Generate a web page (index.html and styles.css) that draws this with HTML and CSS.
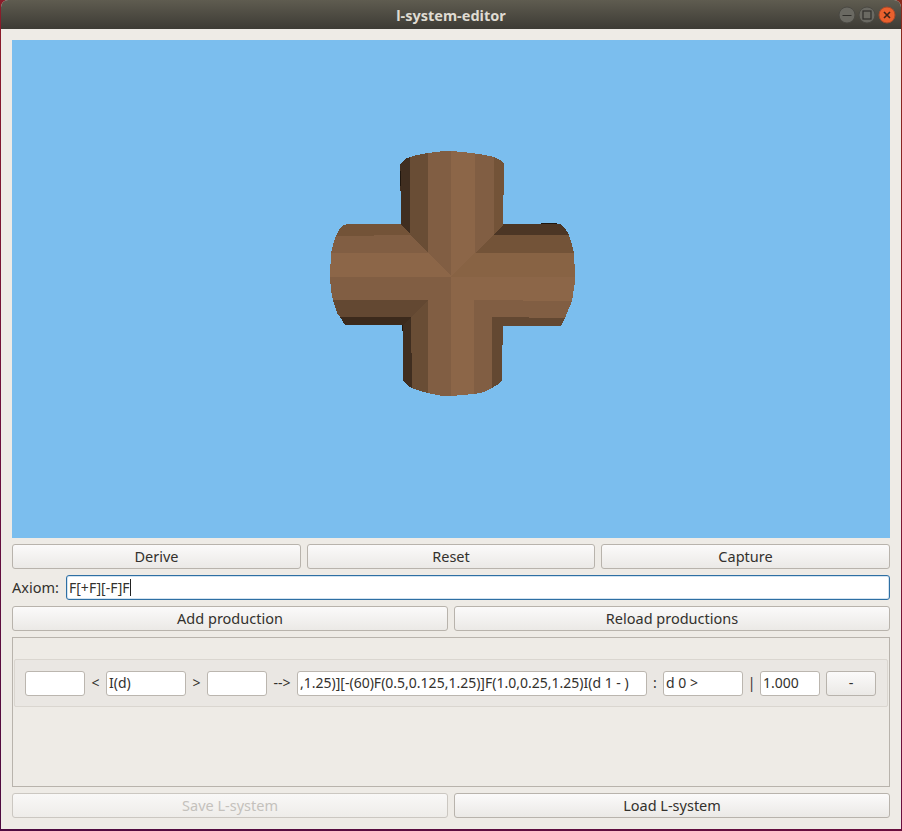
FILE: index.html
```html
<!DOCTYPE html>
<html lang="en">
<head>
<meta charset="utf-8">
<title>l-system-editor</title>
<link rel="stylesheet" href="styles.css">
</head>
<body>
<div class="window">
  <header class="titlebar">
    <div></div>
    <div class="title">l-system-editor</div>
    <div class="controls">
      <svg class="ctl" viewBox="0 0 18 18"><circle class="ctl-gray" cx="9" cy="9" r="8"/><path class="ctl-glyph" d="M4.5 9.5h9"/></svg>
      <svg class="ctl" viewBox="0 0 18 18"><circle class="ctl-gray" cx="9" cy="9" r="8"/><rect class="ctl-glyph" x="5" y="5" width="8" height="8"/></svg>
      <svg class="ctl" viewBox="0 0 18 18"><circle class="ctl-close" cx="9" cy="9" r="8"/><path class="ctl-x" d="M6 6l6 6M12 6l-6 6"/></svg>
    </div>
  </header>
  <main class="content">
    <div class="viewport">
      <svg class="scene" viewBox="12 40 878 498">
        <!-- base fill under the seams between the faces -->
        <polygon class="c-mid" points="401,224 503,225 475,253 451,277 428,300 411,317 428,253"/>
        <polygon class="c-dark2" points="401,224 451,277 410,235"/>
        <!-- left arm -->
        <polygon class="c-dark2" points="348,224 401,224 411,235 336,236 340,228 343,225"/>
        <polygon class="c-mid" points="336,236 411,235 429,253 331,253 333,245"/>
        <polygon class="c-light" points="331,253 429,253 452,277 330,277 330,275"/>
        <polygon class="c-mid" points="330,277 451,277 428,300 333,300 331,290"/>
        <polygon class="c-dark3" points="333,300 428,300 411,317 340,317 337,313"/>
        <polygon class="c-darkest2" points="340,317 411,317 403,325 345,325"/>
        <!-- right arm -->
        <polygon class="c-shade" points="503,224 560,224 565,228 569,235 494,235"/>
        <polygon class="c-dark2" points="494,235 569,235 572,245 574,253 475,253"/>
        <polygon class="c-light2" points="475,253 574,253 575,275 575,277 451,277 451,275"/>
        <polygon class="c-light" points="451,277 575,277 575,282 572,301 474,300"/>
        <polygon class="c-mid" points="474,300 572,301 565,318 492,317"/>
        <polygon class="c-dark3" points="492,317 565,318 561,326 503,326"/>
        <!-- top arm -->
        <polygon class="c-darkest" points="400,164 403,161 407,158 410,157 410,234 401,224 401,195 400,186"/>
        <polygon class="c-dark" points="410,157 415,155.5 420,154.5 428,153 428,253 410,234"/>
        <polygon class="c-mid" points="428,153 440,151.5 451,151 451,276 428,253"/>
        <polygon class="c-light" points="451,151 463,152 475,153.5 475,253 451,276"/>
        <polygon class="c-mid" points="475,153.5 485,155 494,157 494,235 475,253"/>
        <polygon class="c-dark2" points="494,157 500,160 504,163 504,195 503,195 503,225 494,235"/>
        <!-- bottom arm -->
        <polygon class="c-darkest" points="403,325 411,317 412,388 407,385 403,381"/>
        <polygon class="c-dark" points="411,317 428,300 428,393 420,391 412,388"/>
        <polygon class="c-mid" points="428,300 451,277 451,396 440,395.5 428,393"/>
        <polygon class="c-light" points="451,277 474,300 474,394 462,395 451,396"/>
        <polygon class="c-mid" points="474,300 492,317 492,388 484,392 474,394"/>
        <polygon class="c-dark3" points="492,317 503,326 503,340 502,350 502,381 497,385 492,388"/>
        <!-- stray edge pixels -->
        <rect class="c-edge" x="400" y="171" width="1" height="15"/>
        <rect class="c-edge" x="541" y="223" width="16" height="1"/>
        <rect class="c-edge" x="402" y="325" width="1" height="6"/>
      </svg>
    </div>
    <div class="row-3">
      <button class="btn">Derive</button>
      <button class="btn">Reset</button>
      <button class="btn">Capture</button>
    </div>
    <div class="axiom-row">
      <span class="label">Axiom:</span>
      <div class="field focused">F[+F][-F]F<span class="caret"></span></div>
    </div>
    <div class="row-2">
      <button class="btn">Add production</button>
      <button class="btn">Reload productions</button>
    </div>
    <section class="group">
      <div class="production">
        <div class="field w-60"></div>
        <span class="sym sym-angle">&lt;</span>
        <div class="field w-80">I(d)</div>
        <span class="sym sym-angle">&gt;</span>
        <div class="field w-60"></div>
        <span class="sym sym-arrow">--&gt;</span>
        <div class="field w-fill">,1.25)][-(60)F(0.5,0.125,1.25)]F(1.0,0.25,1.25)I(d 1 - )</div>
        <span class="sym sym-colon">:</span>
        <div class="field w-80">d 0 &gt;</div>
        <span class="sym sym-pipe">|</span>
        <div class="field w-60">1.000</div>
        <button class="btn btn-minus">-</button>
      </div>
    </section>
    <div class="row-2">
      <button class="btn" disabled>Save L-system</button>
      <button class="btn">Load L-system</button>
    </div>
  </main>
</div>
</body>
</html>
```
FILE: styles.css
```css
* { box-sizing: border-box; }
html, body { height: 100%; }
body {
  margin: 0;
  padding: 0 1px 2px 1px;
  background: linear-gradient(200deg, #8a2a1c 0%, #8a1c2a 30%, #6a0f3e 70%, #4d0a40 100%);
  font-family: "Noto Sans", "Liberation Sans", sans-serif;
  font-size: 14px;
  color: #33312d;
  overflow: hidden;
}
.window {
  height: 100%;
  display: flex;
  flex-direction: column;
  background: #eeebe6;
  border-radius: 7px 7px 0 0;
  overflow: hidden;
}
.titlebar {
  flex: none;
  height: 29px;
  display: grid;
  grid-template-columns: 1fr auto 1fr;
  align-items: center;
  background: linear-gradient(#5f5c50, #3d3b35);
}
.title {
  font-weight: 700;
  font-size: 14.5px;
  color: #dfdbd2;
}
.controls {
  display: flex;
  justify-content: flex-end;
  gap: 2px;
  padding-right: 5px;
}
.ctl { width: 18px; height: 18px; display: block; }
.ctl-gray { fill: #6a6962; stroke: #4a4943; stroke-width: 1; }
.ctl-close { fill: #e9602d; stroke: #a9492a; stroke-width: 1; }
.ctl-glyph { fill: none; stroke: #2f2e2a; stroke-width: 1.2; }
.ctl-x { fill: none; stroke: #3d2318; stroke-width: 1.6; }
.content {
  flex: 1;
  min-height: 0;
  display: flex;
  flex-direction: column;
  gap: 6px;
  padding: 11px;
}
.viewport {
  flex: 1;
  min-height: 0;
  background: #7bbeee;
}
.scene { display: block; width: 100%; height: 100%; shape-rendering: crispEdges; }
.c-darkest { fill: #402e20; }
.c-darkest2 { fill: #3c2a1c; }
.c-dark { fill: #694d35; }
.c-dark2 { fill: #735338; }
.c-dark3 { fill: #634832; }
.c-shade { fill: #4c3625; }
.c-mid { fill: #815e43; }
.c-light { fill: #8c6648; }
.c-light2 { fill: #886344; }
.c-edge { fill: #1f160e; }
.row-3 { flex: none; display: grid; grid-template-columns: 289px 288px 1fr; gap: 6px; }
.row-2 { flex: none; display: grid; grid-template-columns: 1fr 1fr; gap: 6px; }
.btn {
  height: 25px;
  padding: 0 0 2px;
  border: 1px solid #b8b3ac;
  border-radius: 3px;
  background: linear-gradient(#fbfafa, #ebe9e6);
  font: inherit;
  font-size: 14.5px;
  color: #33312d;
}
.btn:disabled { color: #c4c1bc; background: linear-gradient(#f9f8f7, #eeece9); border-color: #cbc7c1; }
.axiom-row { flex: none; display: flex; align-items: center; gap: 6px; }
.label { width: 48px; font-size: 14.5px; padding-bottom: 2px; }
.field {
  height: 25px;
  min-width: 0;
  display: flex;
  align-items: center;
  padding: 0 3px 1px 2px;
  background: #fff;
  border: 1px solid #bbb6af;
  border-radius: 3px;
  white-space: nowrap;
  overflow: hidden;
}
.focused { flex: 1; border-color: #2e6fa3; box-shadow: inset 0 0 0 1px #d3e3f0; }
.caret { width: 1px; height: 17px; background: #222; }
.group {
  flex: none;
  height: 150px;
  border: 1px solid #b8b3ac;
  padding: 21px 1px 0;
}
.production {
  height: 48px;
  display: flex;
  align-items: center;
  gap: 6px;
  padding: 0 11px 0 10px;
  background: #eae7e3;
  border: 1px solid #dad6d0;
  border-radius: 2px;
}
.w-60 { flex: none; width: 60px; }
.w-80 { flex: none; width: 80px; }
.w-fill { flex: 1; }
.sym { flex: none; display: flex; justify-content: center; white-space: nowrap; padding-bottom: 2px; }
.sym-angle { width: 9px; }
.sym-arrow { width: 18px; }
.sym-colon { width: 4px; }
.sym-pipe { width: 5px; }
.btn-minus { flex: none; width: 50px; }
```
